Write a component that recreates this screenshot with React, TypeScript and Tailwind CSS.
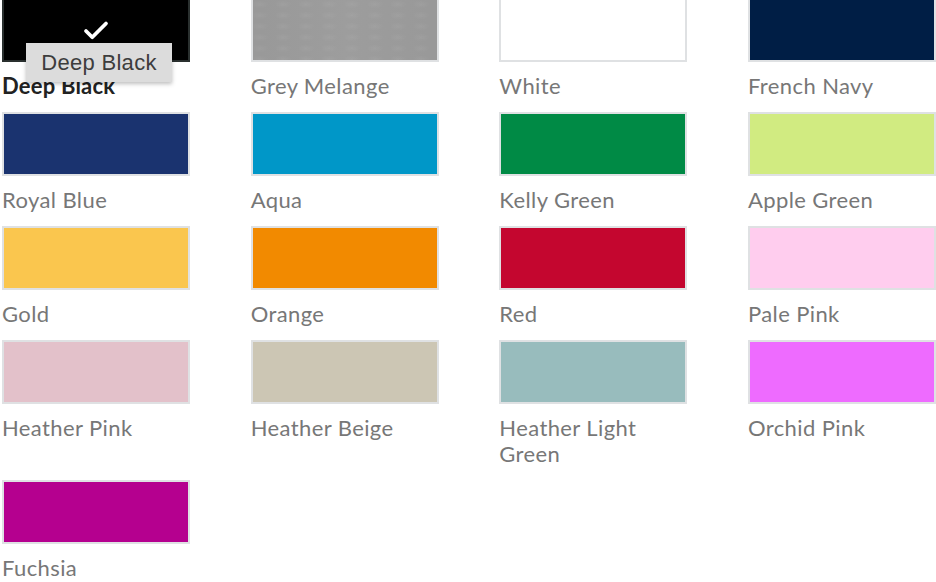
import { Check } from 'lucide-react';

const colours = [
  { name: 'Deep Black', hex: '#000000', selected: true },
  { name: 'Grey Melange', hex: '#9b9b9b', melange: true },
  { name: 'White', hex: '#ffffff' },
  { name: 'French Navy', hex: '#001e45' },
  { name: 'Royal Blue', hex: '#1a336f' },
  { name: 'Aqua', hex: '#0097c8' },
  { name: 'Kelly Green', hex: '#008a45' },
  { name: 'Apple Green', hex: '#d1eb81' },
  { name: 'Gold', hex: '#fac64e' },
  { name: 'Orange', hex: '#f28a00' },
  { name: 'Red', hex: '#c4062f' },
  { name: 'Pale Pink', hex: '#ffcdee' },
  { name: 'Heather Pink', hex: '#e3c1ca' },
  { name: 'Heather Beige', hex: '#ccc6b4' },
  { name: 'Heather Light Green', hex: '#98bcbd' },
  { name: 'Orchid Pink', hex: '#ee6bff' },
  { name: 'Fuchsia', hex: '#b5008f' },
];

function Swatch({ name, hex, selected, melange }: { name: string; hex: string; selected?: boolean; melange?: boolean }) {
  return (
    <div className="relative">
      <div
        className={
          selected
            ? 'relative flex h-[64px] w-[188px] items-start justify-center border-2 border-[#2a302f]'
            : 'relative flex h-[64px] w-[188px] items-start justify-center border-2 border-[#dfe1e3]'
        }
        style={{
          backgroundColor: hex,
          backgroundImage: melange
            ? 'radial-gradient(ellipse 9px 4px at 30% 40%, rgba(255,255,255,0.05), transparent), linear-gradient(90deg, rgba(0,0,0,0.015), rgba(255,255,255,0.02), rgba(0,0,0,0.015))'
            : undefined,
          backgroundSize: melange ? '23px 11px, 100% 100%' : undefined,
        }}
      >
        {selected && <Check className="mt-[16px] h-[30px] w-[30px] text-white" strokeWidth={3} />}
      </div>
      <div
        className={
          selected
            ? 'mt-[11px] text-[22px] font-bold leading-[26px] tracking-[0.2px] text-[#222]'
            : 'mt-[11px] text-[22px] leading-[26px] tracking-[0.4px] text-[#777]'
        }
        style={{ fontFamily: 'Lato, "Open Sans", sans-serif' }}
      >
        {name}
      </div>
      {selected && (
        <div
          className="absolute left-[24px] top-[45px] flex h-[39px] w-[146px] items-center justify-center bg-[#dcdcdc] text-[22px] tracking-[0.3px] text-[#3d3d3d] shadow-[0_2px_4px_rgba(0,0,0,0.25)]"
          style={{ fontFamily: '"Liberation Sans", Arial, sans-serif' }}
        >
          Deep Black
        </div>
      )}
    </div>
  );
}

export default function App() {
  return (
    <div className="h-[582px] w-[936px] overflow-hidden bg-white">
      <div className="-mt-[2px] grid grid-cols-[repeat(4,188px)] gap-x-[60.67px] gap-y-[13px] pl-[2px]">
        {colours.map((c) => (
          <Swatch key={c.name} {...c} />
        ))}
      </div>
    </div>
  );
}
